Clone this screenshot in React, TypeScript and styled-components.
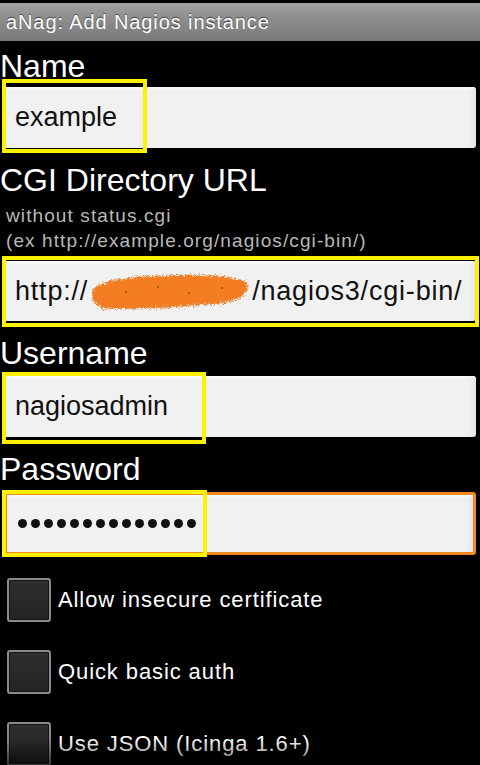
import * as React from "react"
import styled, { createGlobalStyle } from "styled-components"

const GlobalStyle = createGlobalStyle`
html, body {
  margin: 0;
  padding: 0;
  background: #000;
}
body {
  font-family: "Liberation Sans", Arial, sans-serif;
}
`

const Screen = styled.div`
width: 480px;
height: 765px;
overflow: hidden;
position: relative;
background: #000;
color: #fff;
padding-top: 3px;
box-sizing: border-box;
`

const TitleBar = styled.div`
height: 38px;
display: flex;
align-items: center;
padding-left: 6px;
background: linear-gradient(#a2a2a2, #8c8c8c 45%, #7a7a7a);
font-size: 20px;
letter-spacing: 0.9px;
color: #fff;
text-shadow: 0 -1px 1px rgba(0, 0, 0, 0.55);
`

const Form = styled.div`
display: flex;
flex-direction: column;
`

const Label = styled.div<{ $first?: boolean }>`
font-size: 32px;
line-height: 36px;
margin-top: ${p => (p.$first ? "7px" : "14px")};
color: #fff;
`

const HintBlock = styled.div`
margin-top: 5px;
margin-bottom: 8px;
`

const Hint = styled.div`
font-size: 19px;
line-height: 25px;
letter-spacing: 1.1px;
color: #b8b8b8;
padding-left: 6px;
`

const InputBox = styled.div<{ $h: number; $focus?: boolean; $top?: number }>`
position: relative;
margin: ${p => p.$top ?? 4}px 4px 0 4px;
height: ${p => p.$h}px;
box-sizing: border-box;
background: #f1f1f1;
border-radius: 3px;
border: ${p => (p.$focus ? "3px solid #f08a1e" : "none")};
box-shadow: inset -6px 0 6px -4px rgba(0, 0, 0, 0.08), inset 0 2px 2px rgba(255, 255, 255, 0.8);
display: flex;
align-items: center;
padding-left: ${p => (p.$focus ? 11 : 11)}px;
color: #111;
font-size: 27px;
white-space: nowrap;
`

const UrlText = styled.span`
letter-spacing: 0.8px;
display: flex;
align-items: center;
`

const Dots = styled.span`
display: flex;
gap: 4px;
`

const Dot = styled.span`
width: 9px;
height: 9px;
border-radius: 50%;
background: #111;
`

const Highlight = styled.div<{ $left: number; $top: number; $w: number; $h: number }>`
position: absolute;
left: ${p => p.$left}px;
top: ${p => p.$top}px;
width: ${p => p.$w}px;
height: ${p => p.$h}px;
border: 4px solid #fff200;
box-sizing: border-box;
pointer-events: none;
`

const CheckList = styled.div`
margin-top: 9px;
display: flex;
flex-direction: column;
`

const CheckRow = styled.div`
height: 72px;
display: flex;
align-items: center;
gap: 7px;
padding-left: 7px;
font-size: 22px;
letter-spacing: 0.9px;
color: #fff;
`

const Box = styled.span`
width: 44px;
height: 44px;
box-sizing: border-box;
border: 2px solid #8a8a8a;
border-radius: 3px;
background: linear-gradient(#2e2e2e, #232323);
box-shadow: inset 0 0 0 1px #151515;
flex-shrink: 0;
`

const BottomFade = styled.div`
position: absolute;
left: 0;
right: 0;
bottom: 0;
height: 26px;
background: linear-gradient(rgba(0, 0, 0, 0), rgba(0, 0, 0, 0.6));
pointer-events: none;
`

// the hidden hostname, smudged out in orange
const Scribble: React.FC = () => (
  <svg width="164" height="46" viewBox="0 0 164 46" style={{ display: "block" }}>
    <defs>
      <filter id="grain" x="-10%" y="-20%" width="120%" height="140%">
        <feTurbulence type="fractalNoise" baseFrequency="1.2" numOctaves="2" seed="5" result="n" />
        <feDisplacementMap in="SourceGraphic" in2="n" scale="9" xChannelSelector="R" yChannelSelector="G" />
      </filter>
    </defs>
    <g filter="url(#grain)">
      <path
        d="M5 22 C 14 10, 50 8, 96 7 C 128 7, 150 9, 159 15 C 162 24, 154 34, 126 36 C 90 39, 50 42, 14 40 C 5 36, 2 28, 5 22 Z"
        fill="#f47c21"
      />
    </g>
    <circle cx="38" cy="24" r="0.8" fill="#332" />
    <circle cx="70" cy="19" r="0.8" fill="#332" />
    <circle cx="101" cy="25" r="0.8" fill="#332" />
    <circle cx="134" cy="20" r="0.8" fill="#332" />
  </svg>
)

const options = ["Allow insecure certificate", "Quick basic auth", "Use JSON (Icinga 1.6+)"]

const App: React.FC<{}> = () => {
  return (
    <>
      <GlobalStyle />
      <Screen>
        <TitleBar>aNag: Add Nagios instance</TitleBar>
        <Form>
          <Label $first>Name</Label>
          <InputBox $h={61} $top={3}>
            example
            <Highlight $left={-2} $top={-8} $w={145} $h={74} />
          </InputBox>

          <Label>CGI Directory URL</Label>
          <HintBlock>
            <Hint>without status.cgi</Hint>
            <Hint>(ex http://example.org/nagios/cgi-bin/)</Hint>
          </HintBlock>
          <InputBox $h={60} $top={0}>
            <UrlText>
              http://
              <Scribble />
              /nagios3/cgi-bin/
            </UrlText>
            <Highlight $left={-2} $top={-5} $w={477} $h={71} />
          </InputBox>

          <Label>Username</Label>
          <InputBox $h={61} $top={5}>
            nagiosadmin
            <Highlight $left={-2} $top={-4} $w={204} $h={72} />
          </InputBox>

          <Label>Password</Label>
          <InputBox $h={63} $top={5} $focus>
            <Dots>
              {Array.from({ length: 14 }, (_, i) => (
                <Dot key={i} />
              ))}
            </Dots>
            <Highlight $left={-5} $top={-5} $w={205} $h={67} />
          </InputBox>

          <CheckList>
            {options.map(o => (
              <CheckRow key={o}>
                <Box />
                {o}
              </CheckRow>
            ))}
          </CheckList>
        </Form>
        <BottomFade />
      </Screen>
    </>
  )
}

export default App
